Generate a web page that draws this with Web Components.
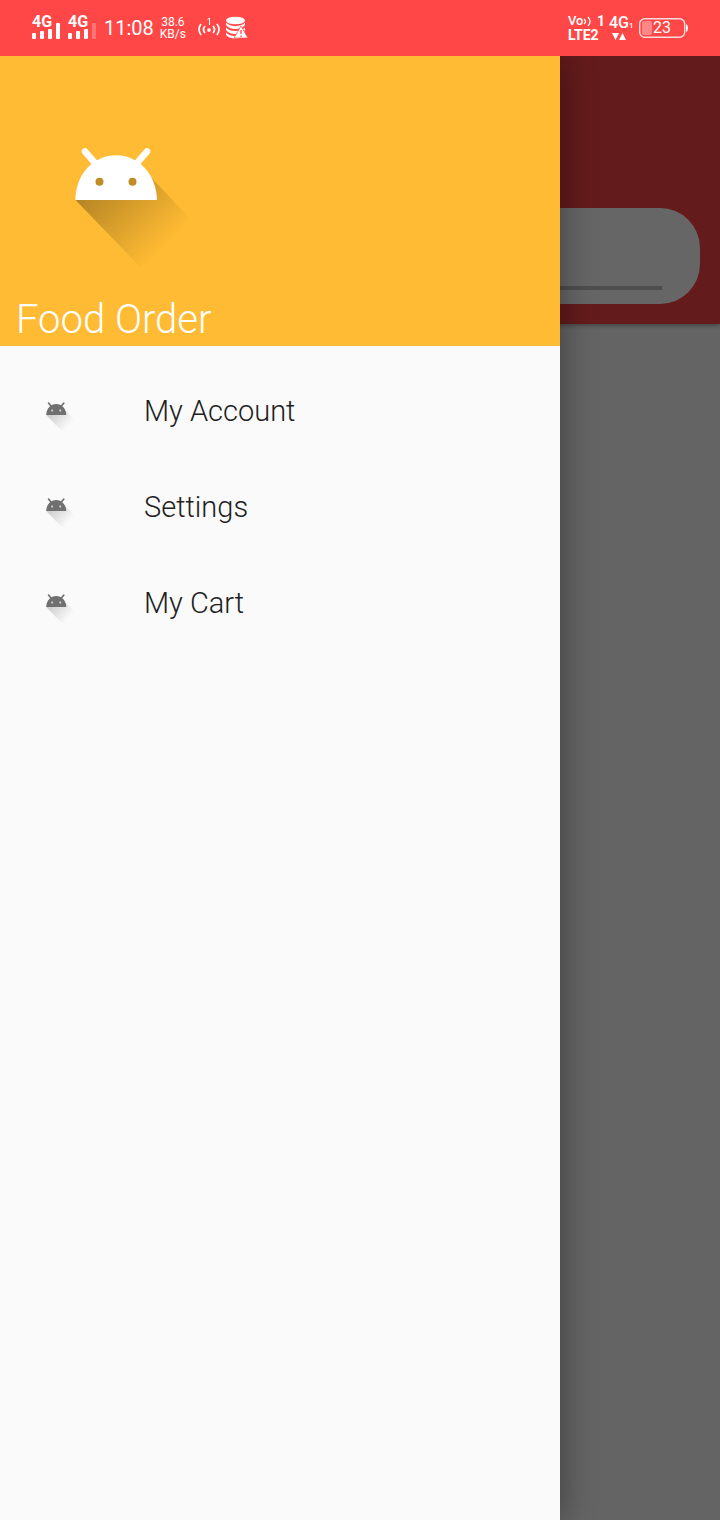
<!DOCTYPE html>
<html lang="en">
<head>
<meta charset="utf-8">
<meta name="viewport" content="width=device-width, initial-scale=1">
<title>Food Order</title>
<style>
  body { margin: 0; font-family: Roboto, "Liberation Sans", sans-serif; }
</style>
</head>
<body>
<food-app>
  <status-bar slot="status"></status-bar>
  <search-page slot="page"></search-page>
  <nav-drawer slot="drawer" heading="Food Order">
    <nav-item>My Account</nav-item>
    <nav-item>Settings</nav-item>
    <nav-item>My Cart</nav-item>
  </nav-drawer>
</food-app>
<script>
class Base extends HTMLElement {
  constructor() {
    super();
    this.attachShadow({ mode: "open" }).innerHTML = this.constructor.markup;
  }
}

class FoodApp extends Base {
  static markup = `
  <style>
    :host { display: flex; flex-direction: column; min-height: 100vh; background: #ff4747; }
    .stage { position: relative; flex: 1; display: flex; overflow: hidden; }
    ::slotted([slot=page]) { flex: 1; }
    .scrim { position: absolute; inset: 0; background: rgba(0,0,0,.6); }
    ::slotted([slot=drawer]) { position: absolute; inset: 0 auto 0 0; width: 78%; max-width: 560px; }
  </style>
  <slot name="status"></slot>
  <div class="stage">
    <slot name="page"></slot>
    <div class="scrim"></div>
    <slot name="drawer"></slot>
  </div>`;
}

class SignalBars extends Base {
  static markup = `
  <style>
    :host { display: grid; width: 28px; height: 28px; }
    span, svg { grid-area: 1 / 1; }
    span { font-size: 16px; line-height: 16px; font-weight: 700; }
    svg { width: 28px; height: 28px; fill: currentColor; }
    :host([weak]) .last { opacity: .25; }
  </style>
  <span>4G</span>
  <svg viewBox="0 0 28 28" aria-hidden="true">
    <rect x="0" y="19" width="4" height="6" rx="1"/><rect x="8" y="17" width="4" height="8" rx="1"/>
    <rect x="16" y="15" width="4" height="10" rx="1"/><rect class="last" x="24" y="9" width="4" height="16" rx="1"/>
  </svg>`;
}

class StatusBar extends Base {
  static markup = `
  <style>
    :host { display: flex; align-items: center; box-sizing: border-box; height: 56px; padding: 0 32px; gap: 8px; background: #ff4747; color: #fff; }
    .time { font-size: 20px; line-height: 28px; }
    .rate { font-size: 12px; line-height: 12px; text-align: center; margin-left: -2px; }
    .hotspot { margin-left: 4px; }
    svg { display: block; }
    .stack { margin-left: -2px; }
    .right { display: flex; align-items: center; gap: 4px; margin-left: auto; }
    .lte { font-size: 14px; line-height: 14px; font-weight: 700; width: 37px; }
    .line { display: flex; align-items: center; justify-content: space-between; height: 14px; }
    .volte { font-size: 13px; font-weight: 500; display: flex; align-items: center; }
    .net { font-size: 16px; line-height: 14px; font-weight: 500; width: 26px; }
    .net small { font-size: 8px; }
    .battery { display: grid; align-items: center; width: 49px; height: 20px; }
    .battery > * { grid-area: 1 / 1; }
    .battery span { font-size: 16px; line-height: 20px; padding-left: 14px; }
  </style>
  <signal-bars></signal-bars>
  <signal-bars weak></signal-bars>
  <div class="time">11:08</div>
  <div class="rate">38.6<br>KB/s</div>
  <svg class="hotspot" width="22" height="22" viewBox="0 0 22 22" fill="none" stroke="#fff" stroke-width="1.700" aria-hidden="true">
    <path d="M3 7Q-1 12.500 3 18M7 9Q4 12.500 7 16M15 9Q18 12.500 15 16M19 7Q23 12.500 19 18"/>
    <circle cx="11" cy="13" r="1" /><path d="M9.500 2.500 11.500 1V8" stroke-width="1"/>
  </svg>
  <svg class="stack" width="22" height="24" viewBox="0 0 22 24" aria-hidden="true">
    <g fill="#fff"><ellipse cx="9.500" cy="4.500" rx="9.500" ry="3.800"/>
    <path d="M0 6.500Q3 10 9.500 10T19 6.500V9Q16 13 9.500 13T0 9zM0 11.500Q3 15 9.500 15T19 11.500V14Q16 18 9.500 18T0 14zM0 16.500Q3 20 9.500 20T19 16.500V19Q16 22.500 9.500 22.500T0 19z"/></g>
    <path d="M15 10 22 22H8z" fill="#fff" stroke="#ff4747" stroke-width=".7"/><path d="M15 14V18M15 19.500V21" stroke="#ff4747" stroke-width="1.300"/>
  </svg>
  <div class="right">
    <div class="lte">
      <div class="line"><span class="volte">Vo<svg width="10" height="10" viewBox="0 0 10 10" fill="none" stroke="#fff" stroke-width="1.300" aria-hidden="true"><path d="M1 3Q4 5.500 1 8M5 1Q9 5.500 5 10"/></svg></span><span>1</span></div>
      <div>LTE2</div>
    </div>
    <div class="net">4G<small>1</small>
      <svg width="20" height="8" viewBox="0 0 20 8" fill="#fff" aria-hidden="true"><path d="M3 0h7L6.500 7zM10 7h7L13.500 0z"/></svg>
    </div>
    <div class="battery">
      <svg width="49" height="20" viewBox="0 0 49 20" aria-hidden="true">
        <rect x=".7" y=".7" width="45" height="18.600" rx="5" fill="none" stroke="#fff" stroke-opacity=".8" stroke-width="1.400"/>
        <rect x="3" y="3" width="10" height="14" rx="2" fill="#fff" opacity=".35"/>
        <path d="M47 6q2 1 2 4t-2 4z" fill="#fff"/>
      </svg>
      <span>23</span>
    </div>
  </div>`;
}

class SearchPage extends Base {
  static markup = `
  <style>
    :host { display: block; background: #fafafa; }
    header { padding: 152px 20px 20px; background: #fa4545; box-shadow: 0 1px 5px rgba(0,0,0,.4); }
    label { display: flex; align-items: flex-end; box-sizing: border-box; height: 96px; padding: 0 38px 14px; border-radius: 40px; background: #fff; }
    input { flex: 1; min-width: 0; height: 60px; box-sizing: border-box; padding: 0; border: 0; border-bottom: 4px solid #c4c4c4; background: none; font: inherit; outline: 0; }
  </style>
  <header><label><input type="search" aria-label="Search"></label></header>`;
}

const robotShape = (id, strength) => `
  <defs><linearGradient id="${id}" gradientUnits="userSpaceOnUse" x1="46" y1="46" x2="116" y2="116">
    <stop offset="0" stop-color="#000" stop-opacity="${strength}"/><stop offset="1" stop-color="#000" stop-opacity="0"/>
  </linearGradient></defs>
  <path d="M25.500 70 95 142 143 92 98 44z" fill="url(#${id})"/>
  <path class="body" d="M25.300 70C26 43 44 25.300 66 25.300S106 43 107 70z"/>
  <path class="antenna" d="M35 21.500 45 33M97 21.500 87 33" fill="none" stroke-width="6.500" stroke-linecap="round"/>
  <circle class="eye" cx="49.500" cy="51.700" r="4"/><circle class="eye" cx="82.500" cy="51.700" r="4"/>`;

class NavDrawer extends Base {
  static observedAttributes = ["heading"];
  static markup = `
  <style>
    :host { display: block; background: #fafafa; box-shadow: 0 0 32px rgba(0,0,0,.4); }
    header { display: flex; flex-direction: column; justify-content: flex-end; box-sizing: border-box; height: 290px; padding: 0 16px; background: #ffbb33; color: #fff; }
    svg { width: 170px; height: 150px; margin: 0 34px 14px; }
    .body { fill: #fff; } .antenna { stroke: #fff; } .eye { fill: #bf8c26; }
    h1 { margin: 0; font-size: 40px; line-height: 52px; font-weight: 300; }
    nav { padding-top: 17px; }
  </style>
  <header>
    <svg viewBox="0 0 170 150" aria-hidden="true">${robotShape("shade", .3)}</svg>
    <h1></h1>
  </header>
  <nav><slot></slot></nav>`;
  attributeChangedCallback(name, old, value) { this.shadowRoot.querySelector("h1").textContent = value; }
}

class NavItem extends Base {
  static markup = `
  <style>
    :host { display: block; }
    a { display: flex; align-items: center; gap: 64px; height: 96px; padding: 0 40px; color: #212121; text-decoration: none; font-size: 29px; line-height: 36px; font-weight: 300; }
    svg { width: 40px; height: 40px; flex: none; overflow: visible; }
    .body { fill: #707070; } .antenna { stroke: #707070; } .eye { fill: #ddd; }
  </style>
  <a href="#"><svg viewBox="0 -28 163 163" aria-hidden="true">${robotShape("shade", .2)}</svg><span><slot></slot></span></a>`;
}

customElements.define("signal-bars", SignalBars);
customElements.define("status-bar", StatusBar);
customElements.define("search-page", SearchPage);
customElements.define("nav-item", NavItem);
customElements.define("nav-drawer", NavDrawer);
customElements.define("food-app", FoodApp);
</script>
</body>
</html>
